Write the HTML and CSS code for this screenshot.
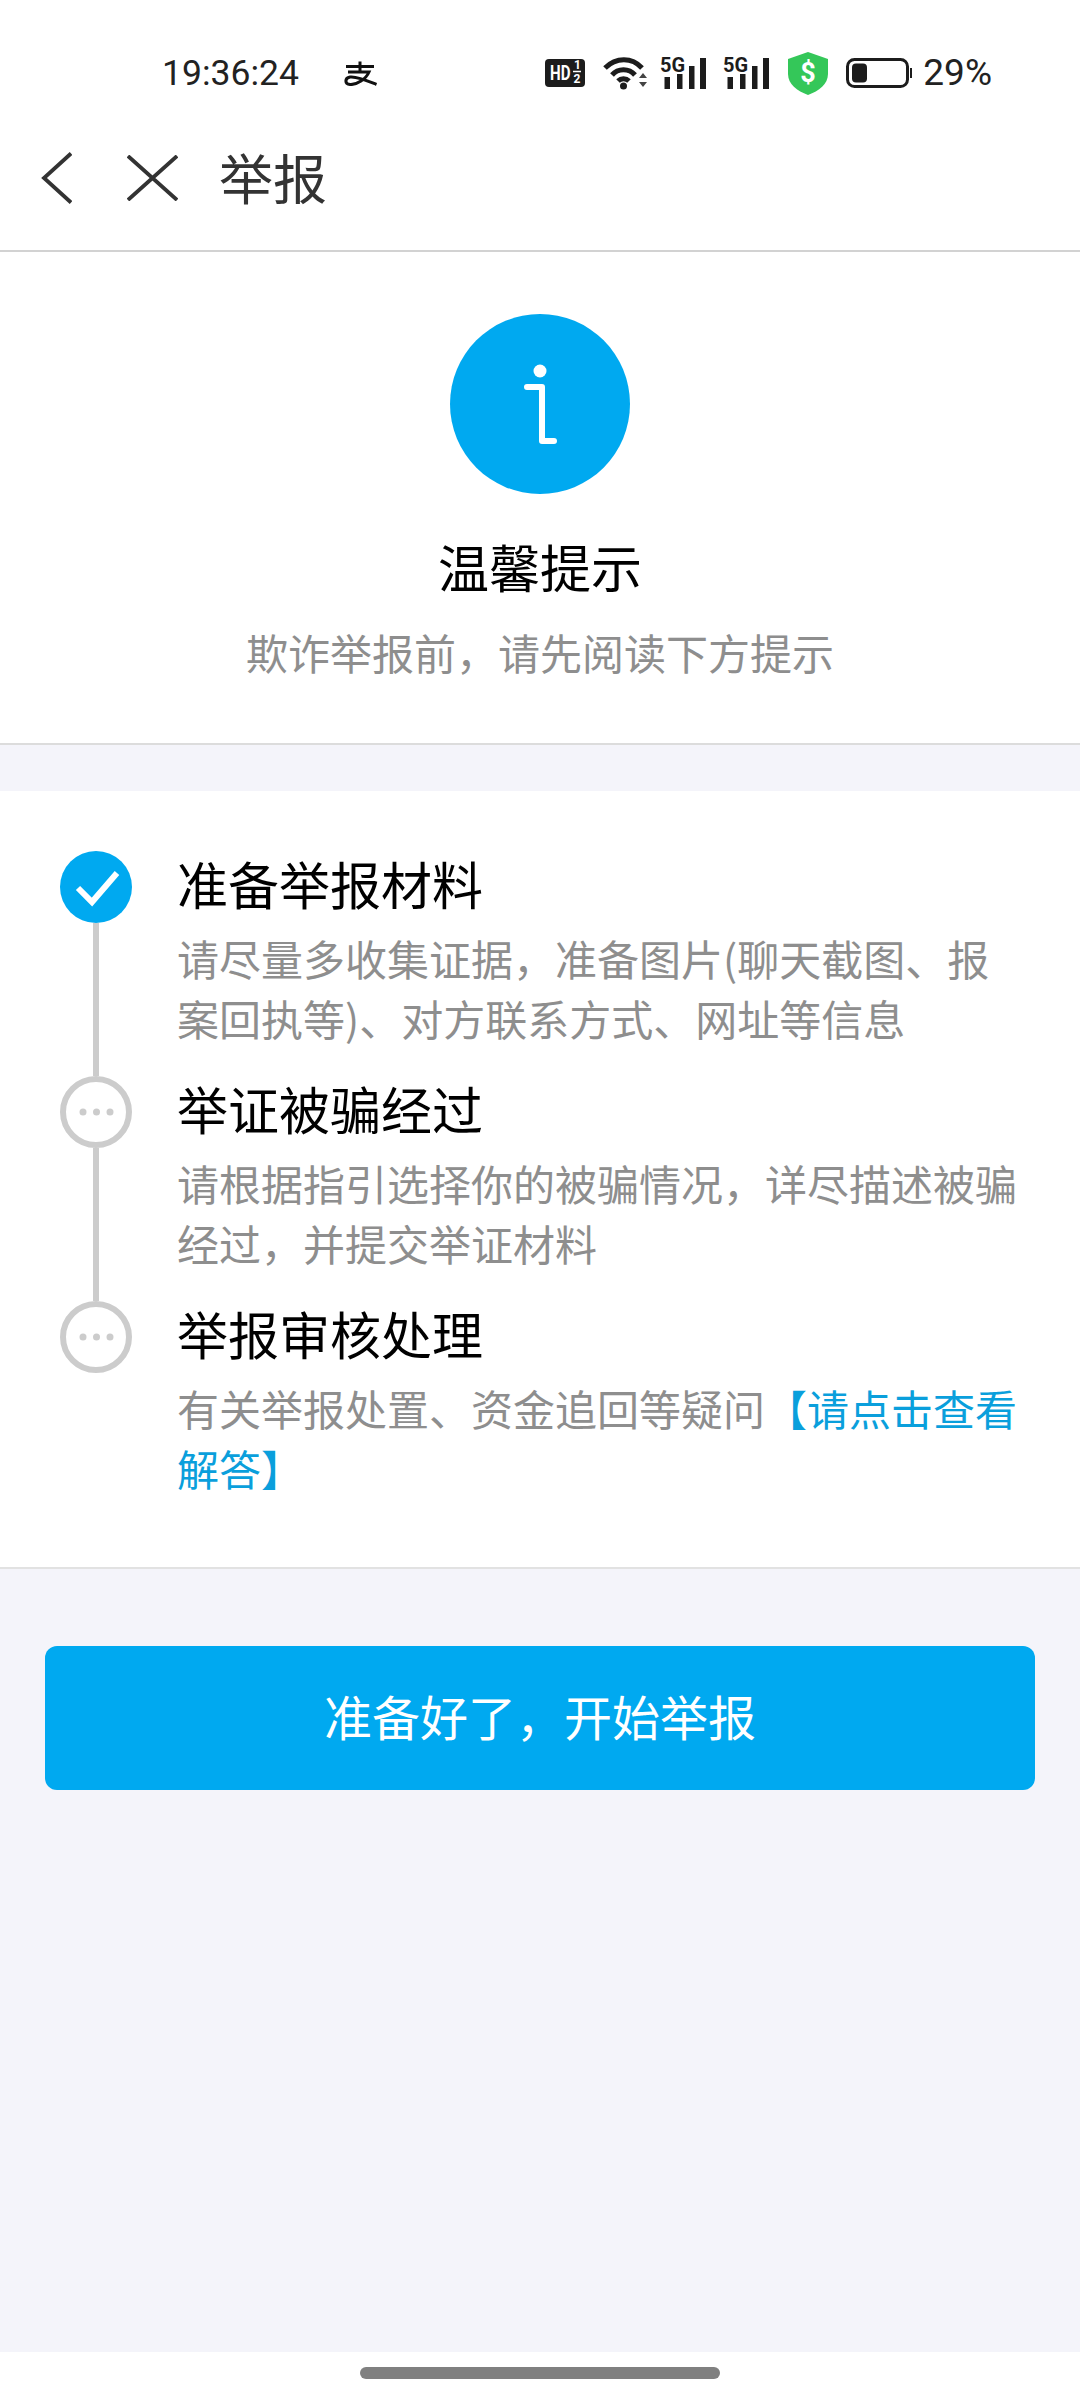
FILE: index.html
```html
<!DOCTYPE html>
<html lang="zh-CN">
<head>
<meta charset="utf-8">
<title>举报</title>
<link rel="stylesheet" href="styles.css">
</head>
<body>
<div class="page">
  <header class="top">
    <div class="status">
      <div class="status-left">
        <span class="time">19:36:24</span>
        <svg class="alipay" viewBox="0 0 33 25"><path d="M2 5.500H30M16 0.500V10M4 11H25C22 18 13 24 6 23.500C0.500 23 0.500 17 6 16C13 15 24 20 32.500 23.500" fill="none" stroke="#111" stroke-width="3"/></svg>
      </div>
      <div class="status-right">
        <svg class="ic-hd" viewBox="0 0 40 28"><rect width="40" height="28" rx="4" fill="#1c1c1c"/><text transform="translate(5 21) scale(.72 1)" class="hd-t">HD</text><text x="29" y="10" class="hd-s">1</text><path d="M28 12.500H36" stroke="#fff" stroke-width="1.500"/><text x="28.500" y="24" class="hd-s">2</text></svg>
        <svg class="ic-wifi" viewBox="0 0 48 36"><g fill="none" stroke="#1c1c1c" stroke-width="5"><path d="M2 13C13 2 29 2 39 13"/><path d="M9 20C15 13 26 13 32 20"/><path d="M15 26C18 23 23 23 26 26"/></g><circle cx="20.500" cy="31" r="3.500" fill="#1c1c1c"/><path d="M36 23L40 18L44 23ZM36 27H44L40 32Z" fill="#444"/></svg>
        <svg class="ic-sig" viewBox="0 0 47 32"><text x="0" y="15" class="sig-t">5G</text><g fill="#1c1c1c"><rect x="4.500" y="20" width="5.500" height="12"/><rect x="17" y="17" width="5.500" height="15"/><rect x="29" y="9" width="5.500" height="23"/><rect x="40" y="1" width="6" height="31"/></g></svg>
        <svg class="ic-sig" viewBox="0 0 47 32"><text x="0" y="15" class="sig-t">5G</text><g fill="#1c1c1c"><rect x="4.500" y="20" width="5.500" height="12"/><rect x="17" y="17" width="5.500" height="15"/><rect x="29" y="9" width="5.500" height="23"/><rect x="40" y="1" width="6" height="31"/></g></svg>
        <svg class="ic-shield" viewBox="0 0 40 43"><path d="M20 0L40 7V22C40 32 31 39 20 43C9 39 0 32 0 22V7Z" fill="#34c759"/><text x="20" y="30" class="sh-t">$</text></svg>
        <svg class="ic-batt" viewBox="0 0 66 30"><rect x="1.500" y="1.500" width="60" height="27" rx="7" fill="none" stroke="#1c1c1c" stroke-width="3"/><rect x="6" y="5.500" width="15" height="19" rx="4" fill="#1c1c1c"/><rect x="64" y="10" width="2" height="10" fill="#1c1c1c"/></svg>
        <span class="pct">29%</span>
      </div>
    </div>
    <nav class="nav">
      <svg class="ic-back" viewBox="0 0 31 52"><path d="M30 1.500L3 26L30 50.500" fill="none" stroke="#333" stroke-width="3.800"/></svg>
      <svg class="ic-close" viewBox="0 0 51 46"><path d="M1 1L50 45M50 1L1 45" fill="none" stroke="#333" stroke-width="3.800"/></svg>
      <h1 class="nav-title">举报</h1>
    </nav>
  </header>

  <main class="main">
    <section class="notice">
      <svg class="notice-icon" viewBox="0 0 180 180"><circle cx="90" cy="90" r="90" fill="#00a9f0"/><circle cx="90" cy="57" r="6.500" fill="#fff"/><path d="M77 73H92V127H104" fill="none" stroke="#fff" stroke-width="6" stroke-linecap="round" stroke-linejoin="round"/></svg>
      <h2 class="notice-title">温馨提示</h2>
      <p class="notice-sub">欺诈举报前，请先阅读下方提示</p>
    </section>

    <section class="steps">
      <div class="step">
        <div class="rail">
          <svg class="dot" viewBox="0 0 72 72"><circle cx="36" cy="36" r="36" fill="#00a9f0"/><path d="M18 37L32 51L57 22" fill="none" stroke="#fff" stroke-width="6"/></svg>
          <span class="line"></span>
        </div>
        <div class="step-body">
          <h3 class="step-title">准备举报材料</h3>
          <p class="step-text">请尽量多收集证据，准备图片(聊天截图、报案回执等)、对方联系方式、网址等信息</p>
        </div>
      </div>
      <div class="step">
        <div class="rail">
          <svg class="dot" viewBox="0 0 72 72"><circle cx="36" cy="36" r="33" fill="#fff" stroke="#ccc" stroke-width="6"/><g fill="#ccc"><circle cx="23" cy="36" r="3.500"/><circle cx="36.500" cy="36" r="3.500"/><circle cx="50" cy="36" r="3.500"/></g></svg>
          <span class="line"></span>
        </div>
        <div class="step-body">
          <h3 class="step-title">举证被骗经过</h3>
          <p class="step-text">请根据指引选择你的被骗情况，详尽描述被骗经过，并提交举证材料</p>
        </div>
      </div>
      <div class="step">
        <div class="rail">
          <svg class="dot" viewBox="0 0 72 72"><circle cx="36" cy="36" r="33" fill="#fff" stroke="#ccc" stroke-width="6"/><g fill="#ccc"><circle cx="23" cy="36" r="3.500"/><circle cx="36.500" cy="36" r="3.500"/><circle cx="50" cy="36" r="3.500"/></g></svg>
        </div>
        <div class="step-body">
          <h3 class="step-title">举报审核处理</h3>
          <p class="step-text">有关举报处置、资金追回等疑问<a class="link">【请点击查看</a><a class="link">解答】</a></p>
        </div>
      </div>
    </section>

    <div class="action">
      <button class="start">准备好了，开始举报</button>
    </div>
  </main>

  <footer class="home"><span class="home-bar"></span></footer>
</div>
</body>
</html>
```

FILE: styles.css
```css
* { box-sizing: border-box; }
html, body { margin: 0; padding: 0; }
body {
  font-family: "Noto Sans CJK SC", "Noto Sans", sans-serif;
  background: #fff;
}
.page {
  width: 1080px;
  height: 2400px;
  display: flex;
  flex-direction: column;
  overflow: hidden;
}
.top {
  background: #fff;
  border-bottom: 2px solid #d2d2d2;
  height: 252px;
}
.status {
  height: 120px;
  padding: 26px 88px 0 162px;
  display: flex;
  align-items: center;
  justify-content: space-between;
}
.status-left, .status-right { display: flex; align-items: center; }
.time {
  font-family: Roboto, sans-serif;
  font-size: 35.5px;
  line-height: 40px;
  color: #222;
}
.alipay { width: 33px; height: 25px; margin-left: 45px; }
.pct {
  font-family: Roboto, sans-serif;
  font-size: 37px;
  line-height: 40px;
  color: #222;
  margin-left: 11px;
}
.ic-hd { width: 40px; height: 28px; }
.ic-wifi { width: 48px; height: 36px; margin-left: 18px; }
.ic-sig { width: 47px; height: 32px; margin-left: 9px; overflow: visible; }
.ic-sig + .ic-sig { margin-left: 16px; }
.ic-shield { width: 40px; height: 43px; margin-left: 18px; }
.ic-batt { width: 66px; height: 30px; margin-left: 18px; }
.hd-t { font: 700 21px "Roboto", sans-serif; fill: #fff; }
.hd-s { font: 700 12px "Roboto", sans-serif; fill: #fff; }
.sig-t { font: 700 20px "Roboto", sans-serif; fill: #1c1c1c; }
.sh-t { font: 700 27px "Roboto", sans-serif; fill: #fff; text-anchor: middle; }
.nav {
  height: 114px;
  padding-left: 41px;
  display: flex;
  align-items: center;
}
.ic-back { width: 31px; height: 52px; margin-top: 2px; }
.ic-close { width: 51px; height: 46px; margin-left: 55px; margin-top: 2px; }
.nav-title {
  margin: 0 0 0 41px;
  font-size: 54px;
  font-weight: 400;
  line-height: 70px;
  color: #333;
}
.main {
  flex: 1;
  background: #f4f4fa;
  display: flex;
  flex-direction: column;
}
.notice {
  background: #fff;
  border-bottom: 2px solid #dcdcdc;
  height: 493px;
  padding-top: 62px;
  display: flex;
  flex-direction: column;
  align-items: center;
}
.notice-icon { width: 180px; height: 180px; }
.notice-title {
  margin: 37px 0 0;
  font-size: 51px;
  font-weight: 400;
  line-height: 70px;
  color: #000;
}
.notice-sub {
  margin: 21px 0 0;
  font-size: 42px;
  line-height: 60px;
  color: #8e8e8e;
}
.steps {
  margin-top: 46px;
  background: #fff;
  border-bottom: 2px solid #e2e2e2;
  height: 778px;
  padding: 60px 0 0 60px;
}
.step { display: flex; }
.rail {
  width: 72px;
  flex: none;
  display: flex;
  flex-direction: column;
  align-items: center;
}
.dot { width: 72px; height: 72px; flex: none; display: block; }
.line { flex: 1; width: 6px; background: #ccc; }
.step-body {
  width: 852px;
  margin-left: 45px;
  padding-bottom: 28px;
}
.step-title {
  margin: 0 0 13px;
  font-size: 51px;
  font-weight: 400;
  line-height: 64px;
  color: #000;
}
.step-text {
  margin: 0;
  font-size: 42px;
  line-height: 60px;
  color: #8e8e8e;
}
.link { color: #0a9fdc; }
.action { padding: 77px 45px 0; }
.start {
  display: block;
  width: 100%;
  height: 144px;
  border: 0;
  border-radius: 12px;
  padding: 0 0 6px;
  background: #00a9f0;
  color: #fff;
  font-family: inherit;
  font-size: 48px;
}
.home {
  height: 48px;
  background: #fff;
  display: flex;
  justify-content: center;
  padding-top: 15px;
}
.home-bar {
  width: 360px;
  height: 12px;
  border-radius: 6px;
  background: #808080;
}
```
